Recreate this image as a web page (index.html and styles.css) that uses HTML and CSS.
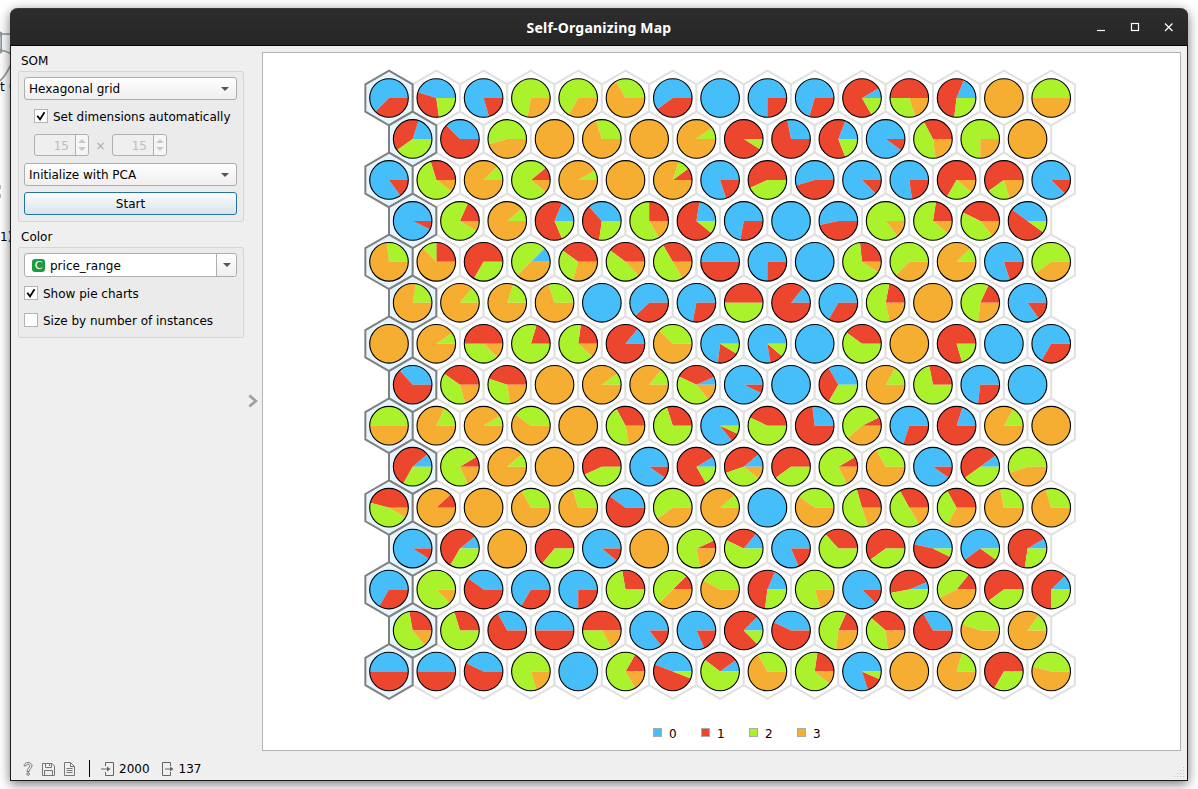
FILE: index.html
```html
<!DOCTYPE html>
<html lang="en">
<head>
<meta charset="utf-8">
<title>Self-Organizing Map</title>
<link rel="stylesheet" href="styles.css">
</head>
<body>
<div class="desktop">
  <svg class="behind" width="12" height="250" viewBox="0 0 12 250">
    <g fill="none" stroke="#8f9ba3" stroke-width="1.7">
      <path d="M0 34H12M1.200 34V51M0 50Q8 51 12 55M12 62Q7 74 0 81"/>
    </g>
    <circle cx="0" cy="34" r="2.500" fill="#8f9ba3"/><circle cx="0" cy="51" r="2.500" fill="#8f9ba3"/>
    <path d="M0 185h1v4H0zM0 194h1v4H0z" fill="#b5babd"/>
    <text x="0" y="91">t <tspan fill="#c4702c">(</tspan></text><text x="0" y="241">1)</text>
  </svg>
  <main class="window">
    <header class="titlebar">
      <h1 class="title">Self-Organizing Map</h1>
      <svg class="winbtns" width="78" height="14" viewBox="0 0 78 14" fill="none" stroke="#fff" stroke-width="1.2">
        <path d="M1 10.500H9"/><rect x="35.500" y="3.500" width="7" height="7"/><path d="M69 3.500l7.500 7.500M76.500 3.500L69 11"/>
      </svg>
    </header>
    <div class="content">
      <aside class="controls">
        <h2 class="label">SOM</h2>
        <section class="group">
          <div class="combo">Hexagonal grid<i class="arrow"></i></div>
          <div class="check indent"><span class="box"><svg width="12" height="12" viewBox="0 0 12 12"><path class="tick" d="M2.300 5.800L5 9.400 9.500 2.300"/></svg></span><span class="caption">Set dimensions automatically</span></div>
          <div class="dims">
            <div class="spin"><span class="num">15</span><span class="steps"><i class="up"></i><i class="down"></i></span></div>
            <span class="times">×</span>
            <div class="spin"><span class="num">15</span><span class="steps"><i class="up"></i><i class="down"></i></span></div>
          </div>
          <div class="combo">Initialize with PCA<i class="arrow"></i></div>
          <div class="button">Start</div>
        </section>
        <h2 class="label second">Color</h2>
        <section class="group">
          <div class="combo edit"><span class="cat">C</span>price_range<span class="drop"><i class="arrow"></i></span></div>
          <div class="check pies"><span class="box"><svg width="12" height="12" viewBox="0 0 12 12"><path class="tick" d="M2.300 5.800L5 9.400 9.500 2.300"/></svg></span><span class="caption">Show pie charts</span></div>
          <div class="check size"><span class="box"></span><span class="caption">Size by number of instances</span></div>
        </section>
      </aside>
      <div class="splitter"><svg width="10" height="14" viewBox="0 0 10 14"><path d="M1.300 1.500L7.800 7 1.300 12.500" fill="none" stroke="#a0a0a0" stroke-width="2.800"/></svg></div>
      <section class="canvas">
        <svg id="map" class="map" width="917" height="660" viewBox="263 53 917 660"></svg>
        <div class="legend">
          <span class="key"><i class="swatch s0"></i>0</span>
          <span class="key"><i class="swatch s1"></i>1</span>
          <span class="key"><i class="swatch s2"></i>2</span>
          <span class="key"><i class="swatch s3"></i>3</span>
        </div>
      </section>
    </div>
    <footer class="status">
      <svg class="tools" width="56" height="16" viewBox="0 0 56 16" fill="none" stroke="#777" stroke-width="1">
        <path d="M2 4.800C2 .5 10 .5 10 4.800 10 7.500 7.200 7.700 7.200 10.500H5C5 7 7.800 6.800 7.800 4.800 7.800 2.800 4.200 2.800 4.200 4.800z"/><circle cx="6.100" cy="13" r="1.300"/>
        <path d="M20.500 2.500H30L32.500 5V14.500H20.500zM23.500 2.500V6.500H29.500V2.500M22.500 14.500V9.500H30.500V14.500M27.500 3V5"/>
        <path d="M42.500 1.500H48.500L52.500 5.500V14.500H42.500zM48.500 1.500V5.500H52.500M44.500 7.500H50.500M44.500 9.500H50.500M44.500 11.500H50.500"/>
      </svg>
      <span class="rule"></span>
      <svg class="io in" width="15" height="16" viewBox="0 0 15 16" fill="none" stroke="#666"><path d="M4.500 5V1.500H12.500V14.500H4.500V11M0 8H7"/><path d="M6 5.500L9.500 8 6 10.500z" fill="#666" stroke="none"/></svg>
      <span class="count">2000</span>
      <svg class="io out" width="15" height="16" viewBox="0 0 15 16" fill="none" stroke="#666"><path d="M9.500 5V1.500H1.500V14.500H9.500V11M4 8H10"/><path d="M9 5.500L12.500 8 9 10.500z" fill="#666" stroke="none"/></svg>
      <span class="count">137</span>
      <svg class="grip" width="12" height="12" viewBox="0 0 12 12" fill="#c4c4c4"><path d="M9 0h1v1H9zM6 3h1v1H6zM9 3h1v1H9zM3 6h1v1H3zM6 6h1v1H6zM9 6h1v1H9zM0 9h1v1H0zM3 9h1v1H3zM6 9h1v1H6zM9 9h1v1H9z"/></svg>
    </footer>
  </main>
</div>
<script src="map.js"></script>
</body>
</html>
```
FILE: styles.css
```css
* { box-sizing: border-box; }
body { margin: 0; font: 12px/16px "DejaVu Sans", sans-serif; color: #000; }
.desktop { position: relative; width: 1198px; height: 789px; padding: 8px 10px 8px 10px; overflow: hidden; background: #fff; }
.behind { position: absolute; left: 0; top: 0; }
.window { position: relative; width: 1178px; height: 773px; display: flex; flex-direction: column; background: #efefef; border: 1px solid #1b1b1b; border-top: 0; border-radius: 8px 8px 0 0; box-shadow: 0 3px 12px rgba(0,0,0,.55); }
.titlebar { position: relative; height: 38px; margin: 0 -1px; flex: none; display: flex; align-items: center; justify-content: center; background: linear-gradient(#2d2d2d, #262626); border-top: 1px solid #3b3b3b; border-bottom: 1px solid #050505; border-radius: 8px 8px 0 0; }
.title { margin: 2px 0 0 0; font: bold 14px/20px "Noto Sans", sans-serif; letter-spacing: .2px; color: #fff; }
.winbtns { position: absolute; right: 14px; top: 11px; }
.content { flex: 1; display: flex; min-height: 0; }
.controls { width: 233px; padding: 6px 0 0 7px; }
.label { height: 16px; margin: 0 0 3px 3px; padding-top: 1px; font-size: 12px; font-weight: normal; line-height: 16px; }
.label.second { margin-top: 6px; }
.group { width: 226px; padding: 5px 6px 6px 5px; border: 1px solid #d6d6d6; border-radius: 2px; background: #ebebeb; }
.combo { position: relative; height: 23px; display: flex; align-items: center; padding: 1px 7px 0 4px; border: 1px solid #adadad; border-radius: 3px; background: linear-gradient(#fefefe, #efefef); }
.arrow { margin: -1px 0 0 auto; border: 4px solid transparent; border-top-color: #555; border-bottom: 0; }
.check { display: flex; align-items: center; gap: 5px; height: 16px; }
.indent { margin: 8px 0 10px 10px; }
.caption { padding-top: 1px; }
.box { width: 14px; height: 14px; flex: none; border: 1px solid #b4b4b4; background: #fff; display: block; }
.box svg { display: block; }
.tick { fill: none; stroke: #000; stroke-width: 1.8; }
.dims { display: flex; align-items: center; height: 22px; margin: 0 0 7px 10px; color: #bebebe; }
.spin { width: 55px; height: 22px; display: flex; border: 1px solid #b0b0b0; border-radius: 3px; background: #efefef; }
.num { width: 41px; padding: 3px 6px 0 0; text-align: right; border-right: 1px solid #b0b0b0; }
.steps { flex: 1; display: flex; flex-direction: column; align-items: center; justify-content: center; gap: 4px; background: #f6f6f6; border-radius: 0 3px 3px 0; }
.up, .down { border: 4px solid transparent; }
.up { border-top: 0; border-bottom-color: #c9c9c9; }
.down { border-bottom: 0; border-top-color: #c9c9c9; }
.times { width: 23px; padding-top: 1px; text-align: center; color: #aaa; }
.button { height: 23px; margin-top: 6px; padding-top: 3px; text-align: center; border: 1px solid #2673a0; border-radius: 3px; background: linear-gradient(#fcfdfe, #d9e3ec); }
.edit { height: 24px; padding: 1px 0 0 7px; background: #fff; }
.cat { width: 13px; height: 13px; margin: -1px 5px 0 0; border-radius: 3px; background: #1c9c40; color: #fff; font: 11px/13px "DejaVu Sans", sans-serif; text-align: center; }
.drop { width: 20px; height: 22px; margin: -1px 0 0 auto; display: flex; align-items: center; border-left: 1px solid #adadad; border-radius: 0 3px 3px 0; background: linear-gradient(#fefefe, #efefef); }
.drop .arrow { margin: 0 auto; }
.pies { margin-top: 8px; }
.size { margin: 11px 0 3px; }
.splitter { width: 18px; padding: 348px 0 0 4px; }
.canvas { width: 919px; height: 699px; margin-top: 6px; border: 1px solid #b3b3b3; background: #fff; display: flex; flex-direction: column; }
.map { display: block; }
.legend { display: flex; height: 37px; padding: 13px 0 0 390px; }
.key { width: 48px; display: flex; align-items: flex-start; }
.swatch { width: 9px; height: 9px; margin: 2px 7px 0 0; border: 1px solid #aaa; }
.s0 { background: #46befa; }
.s1 { background: #ed462f; }
.s2 { background: #aaf22b; }
.s3 { background: #f5ae32; }
.status { position: relative; height: 29px; flex: none; display: flex; align-items: center; padding: 6px 0 0 11px; }
.rule { width: 1px; height: 17px; margin: 0 11px; background: #000; }
.count { margin-left: 3px; padding-top: 1px; }
.out { margin-left: 11px; }
.grip { position: absolute; right: 1px; bottom: 1px; }
.behind text { font: 12px "DejaVu Sans", sans-serif; }
.hex { fill: #fff; stroke: #e0e0e0; stroke-width: 2; }
.hex.selected { fill: #e6f5fe; stroke: #808080; }
.ring { fill: none; stroke: #000; stroke-width: 1.1; }
```
FILE: map.js
```js
// Each cell lists its classes counterclockwise from 3 o'clock; a number is the angle where a slice ends.
const rows = [
  "b225r b163r278g b286r g260o g240o g120o b216r b b270r b254r b30r300g r180g288o b68r263g o g180o",
  "b72r216g b135r g196o o g108o o g36o r328g b101r b69r291g b324r r118g278o g270o o",
  "b306r r107g324o g45o r39g320o g30o o r36g72o b288r r205g b197r b315r b278r r240g320o r216g287o b315r",
  "b334r r66g328o g40o b67r293g b132r262g r90g300o b81r321g b260r b b192r g308o r81g320o r154g309o b144r324g",
  "g97o r90g135o r240g b45g225o r144g254o r143g314o r120g300o b180r b270r b r96g327o g225o g45o b288r g216o",
  "g81o g51o g72o g108o b b223r b259r r180g b51r b240r r79g282o o r65g263o b306r",
  "o g35o r180g316o r73g r82g319o b51r g135o b263r329g b279r320g b r144g o r287g b b240r",
  "b132r r145g286o r162g278o o g36o g51o b24r155g308o b335r b b120r240g g60o r101g b263r b",
  "g180o g65o g31o g144o o r118g280o r108g b308r335g r155g b97r r26g221o b252r b72r g60o o",
  "b40r241g r31g294o g40o o r205g b325r b30r300g b40r199g321o r216g r30g296o g120o b325r b36r216g g199o",
  "r165g329o r43o o g119o g107o b144r g216o g40o b g144o r106g288o r119g300o r119g241o g101o g107o",
  "b328r b39r240g o r230g b321r o r25g281o b50r154g b293r r132g r216g b167r334g b216r325g b31r262g",
  "b240r g315o b144r b240r b270r r100g r45g225o g151o b67r263g g288o b315r b23r190g r51g206o r216g b45r270g",
  "r100g309o r107g b119r b180r r180g300o b309r b294r b45r315g b155r r66g263o r139g276o b120r g162o g54o",
  "b180r b180r b155r g287o b r60g300o b159r339g b36r143g g119o r82g320o b288r336g o g73o r240g g165o"
];
const colors = { b: "#46befa", r: "#ed462f", g: "#aaf22b", o: "#f5ae32" };
const step = 47.3, side = step / Math.sqrt(3), radius = 19.3;
let plain = "", selected = "", pies = "";

rows.forEach((row, j) => row.split(" ").forEach((cell, i) => {
  const x = 389 + step * (i + (j % 2) / 2), y = 98 + j * side * 1.5;
  const corners = [[0, -1], [.5, -.5], [.5, .5], [0, 1], [-.5, .5], [-.5, -.5]]
    .map(([dx, dy]) => (x + dx * step).toFixed(2) + "," + (y + dy * side).toFixed(2)).join(" ");
  if (i) plain += `<polygon class="hex" points="${corners}"/>`;
  else selected += `<polygon class="hex selected" points="${corners}"/>`;
  let from = 0;
  for (const [, color, end] of cell.matchAll(/([brgo])(\d*)/g)) {
    const to = end ? +end : 360;
    if (to - from === 360) {
      pies += `<circle cx="${x}" cy="${y}" r="${radius}" fill="${colors[color]}"/>`;
    } else {
      const point = a => `${x + radius * Math.cos(a * Math.PI / 180)} ${y - radius * Math.sin(a * Math.PI / 180)}`;
      pies += `<path fill="${colors[color]}" d="M${x} ${y}L${point(from)}A${radius} ${radius} 0 ${to - from > 180 ? 1 : 0} 0 ${point(to)}Z"/>`;
    }
    from = to;
  }
  pies += `<circle class="ring" cx="${x}" cy="${y}" r="${radius}"/>`;
}));
document.getElementById("map").innerHTML = plain + selected + pies;
```
